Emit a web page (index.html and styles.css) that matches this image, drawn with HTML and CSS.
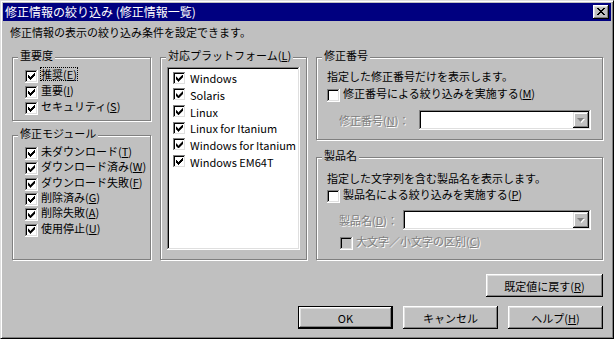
FILE: index.html
```html
<!DOCTYPE html>
<html lang="ja">
<head>
<meta charset="UTF-8" />
<title>修正情報の絞り込み</title>
<link rel="stylesheet" href="styles.css">
</head>
<body>

<div class="window">
  <div class="titlebar">
    <span class="title">修正情報の絞り込み (修正情報一覧)</span>
    <span class="close-btn">
      <svg width="8" height="7" viewBox="0 0 8 7"><path d="M0 0h2v1h-2zM6 0h2v1h-2zM1 1h2v1h-2zM5 1h2v1h-2zM2 2h4v1h-4zM3 3h2v1h-2zM2 4h4v1h-4zM1 5h2v1h-2zM5 5h2v1h-2zM0 6h2v1h-2zM6 6h2v1h-2z" fill="#000"/></svg>
    </span>
  </div>

  <div class="content">
    <p class="desc">修正情報の表示の絞り込み条件を設定できます。</p>

    <div class="columns">
      <div class="col-left">
        <div class="group g-level">
          <span class="group-title">重要度</span>
          <div class="cb-row"><span class="cb on"></span><span class="cb-label focus">推奨(<u>E</u>)</span></div>
          <div class="cb-row"><span class="cb on"></span><span class="cb-label">重要(<u>I</u>)</span></div>
          <div class="cb-row"><span class="cb on"></span><span class="cb-label">セキュリティ(<u>S</u>)</span></div>
        </div>
        <div class="group g-module">
          <span class="group-title">修正モジュール</span>
          <div class="cb-row"><span class="cb on"></span><span class="cb-label">未ダウンロード(<u>T</u>)</span></div>
          <div class="cb-row"><span class="cb on"></span><span class="cb-label">ダウンロード済み(<u>W</u>)</span></div>
          <div class="cb-row"><span class="cb on"></span><span class="cb-label">ダウンロード失敗(<u>F</u>)</span></div>
          <div class="cb-row"><span class="cb on"></span><span class="cb-label">削除済み(<u>G</u>)</span></div>
          <div class="cb-row"><span class="cb on"></span><span class="cb-label">削除失敗(<u>A</u>)</span></div>
          <div class="cb-row"><span class="cb on"></span><span class="cb-label">使用停止(<u>U</u>)</span></div>
        </div>
      </div>

      <div class="group g-platform">
        <span class="group-title">対応プラットフォーム(<u>L</u>)</span>
        <div class="listbox">
          <div class="list-row"><span class="cb on"></span>Windows</div>
          <div class="list-row"><span class="cb on"></span>Solaris</div>
          <div class="list-row"><span class="cb on"></span>Linux</div>
          <div class="list-row"><span class="cb on"></span>Linux for Itanium</div>
          <div class="list-row"><span class="cb on"></span>Windows for Itanium</div>
          <div class="list-row"><span class="cb on"></span>Windows EM64T</div>
        </div>
      </div>

      <div class="col-right">
        <div class="group g-fix">
          <span class="group-title">修正番号</span>
          <div class="line">指定した修正番号だけを表示します。</div>
          <div class="cb-row row-fix"><span class="cb"></span><span class="cb-label">修正番号による絞り込みを実施する(<u>M</u>)</span></div>
          <div class="combo-row row-fix-combo">
            <span class="combo-label disabled label-fix">修正番号(<u>N</u>)：</span>
            <span class="combo">
              <span class="combo-btn">
                <svg width="8" height="5" viewBox="0 0 8 5"><path d="M1 1h7l-3.5 4z" fill="#fff"/><path d="M0 0h7l-3.5 4z" fill="#808080"/></svg>
              </span>
            </span>
          </div>
        </div>

        <div class="group g-product">
          <span class="group-title">製品名</span>
          <div class="line">指定した文字列を含む製品名を表示します。</div>
          <div class="cb-row row-product"><span class="cb"></span><span class="cb-label">製品名による絞り込みを実施する(<u>P</u>)</span></div>
          <div class="combo-row row-product-combo">
            <span class="combo-label disabled label-product">製品名(<u>D</u>)：</span>
            <span class="combo">
              <span class="combo-btn">
                <svg width="8" height="5" viewBox="0 0 8 5"><path d="M1 1h7l-3.5 4z" fill="#fff"/><path d="M0 0h7l-3.5 4z" fill="#808080"/></svg>
              </span>
            </span>
          </div>
          <div class="cb-row row-case"><span class="cb off-disabled"></span><span class="cb-label disabled">大文字／小文字の区別(<u>C</u>)</span></div>
        </div>
      </div>
    </div>

    <div class="reset-row">
      <button class="btn btn-reset">既定値に戻す(<u>R</u>)</button>
    </div>

    <div class="button-row">
      <button class="btn btn-default">OK</button>
      <button class="btn">キャンセル</button>
      <button class="btn">ヘルプ(<u>H</u>)</button>
    </div>
  </div>
</div>

</body>
</html>
```

FILE: styles.css
```css
* { box-sizing: border-box; }

body {
  margin: 0;
  font-family: "Noto Sans CJK JP", sans-serif;
  font-size: 11px;
  color: #000;
  background: #c0c0c0;
}

/* Window frame */
.window {
  width: 614px;
  height: 339px;
  background: #c0c0c0;
  border: 1px solid;
  border-color: #dfdfdf #000 #000 #dfdfdf;
  box-shadow: inset 1px 1px #fff, inset -1px -1px #808080;
  padding: 2px;
  display: flex;
  flex-direction: column;
}

.titlebar {
  height: 18px;
  flex: none;
  background: #000080;
  color: #fff;
  display: flex;
  align-items: center;
  padding: 0 2px;
}
.title {
  flex: 1;
  font-size: 12px;
  line-height: 18px;
  white-space: nowrap;
}
.close-btn {
  width: 16px;
  height: 14px;
  background: #c0c0c0;
  box-shadow: inset -1px -1px #000, inset 1px 1px #fff, inset -2px -2px #808080, inset 2px 2px #dfdfdf;
  display: flex;
  align-items: center;
  justify-content: center;
  padding-bottom: 1px;
}
.close-btn svg { display: block; }

.content {
  flex: 1;
  display: flex;
  flex-direction: column;
  padding: 0 8px 0 4px;
}

.desc {
  margin: 4px 0 0 0;
  padding-left: 3px;
  line-height: 14px;
  white-space: nowrap;
}

.columns {
  display: flex;
  gap: 9px;
  height: 203px;
  margin: 18px 0 0 5px;
}

/* Etched group box */
.group {
  position: relative;
  border: 1px solid #808080;
  box-shadow: inset 1px 1px #fff, 1px 1px #fff;
}
.group-title {
  position: absolute;
  top: -10px;
  left: 5px;
  padding: 0 2px;
  line-height: 14px;
  background: #c0c0c0;
  white-space: nowrap;
}

.col-left {
  width: 139px;
  display: flex;
  flex-direction: column;
}
.g-level {
  height: 64px;
  padding: 9px 0 0 12px;
}
.g-module {
  flex: 1;
  margin-top: 14px;
  padding: 8px 0 0 12px;
}
.g-module .cb-row { height: 15.33px; }

.g-platform {
  width: 147px;
  padding: 9px 6px;
  display: flex;
  flex-direction: column;
}

.col-right {
  width: 287px;
  display: flex;
  flex-direction: column;
}
.g-fix {
  height: 83px;
  padding: 11px 11px 0 10px;
}
.g-product {
  flex: 1;
  margin-top: 17px;
  padding: 13px 11px 0 10px;
}

.line {
  line-height: 14px;
  white-space: nowrap;
}

/* Checkboxes */
.cb-row {
  display: flex;
  align-items: flex-start;
  gap: 2px;
  height: 16px;
  line-height: 14px;
  white-space: nowrap;
}
.cb-row .cb { margin-top: 3px; }
.cb-label { padding: 0 1px; }
.focus { outline: 1px dotted #000; outline-offset: -1px; }

.cb {
  flex: none;
  position: relative;
  width: 13px;
  height: 13px;
  background: #fff;
  box-shadow: inset -1px -1px #fff, inset 1px 1px #808080, inset -2px -2px #dfdfdf, inset 2px 2px #000;
}
.cb.on::after {
  content: '';
  position: absolute;
  left: 3px;
  top: 3px;
  width: 7px;
  height: 7px;
  background: #000;
  clip-path: polygon(6px 0, 7px 0, 7px 3px, 6px 3px, 6px 4px, 5px 4px, 5px 5px, 4px 5px, 4px 6px, 3px 6px, 3px 7px, 2px 7px, 2px 6px, 1px 6px, 1px 5px, 0 5px, 0 2px, 1px 2px, 1px 3px, 2px 3px, 2px 4px, 3px 4px, 3px 3px, 4px 3px, 4px 2px, 5px 2px, 5px 1px, 6px 1px);
}
.cb.off-disabled { background: #c0c0c0; }

.row-fix { margin-top: 3px; }
.row-product { margin-top: 2px; }
.row-case { margin-top: 4px; padding-left: 13px; }

.disabled {
  color: #808080;
  text-shadow: 1px 1px 0 #fff;
}

/* List box */
.listbox {
  flex: 1;
  background: #fff;
  box-shadow: inset -1px -1px #fff, inset 1px 1px #808080, inset -2px -2px #dfdfdf, inset 2px 2px #000;
  padding: 3px 0 0 6px;
}
.list-row {
  display: flex;
  align-items: center;
  gap: 4px;
  height: 16.67px;
  font-size: 11px;
  white-space: nowrap;
}

/* Combo boxes */
.combo-row {
  display: flex;
  align-items: center;
  padding-left: 12px;
}
.row-fix-combo { margin-top: 8px; }
.row-product-combo { margin-top: 7px; }
.label-fix { width: 80px; }
.label-product { width: 64px; }
.combo-label { white-space: nowrap; flex: none; }

.combo {
  flex: 1;
  height: 20px;
  background: #fff;
  box-shadow: inset -1px -1px #fff, inset 1px 1px #808080, inset -2px -2px #dfdfdf, inset 2px 2px #000;
  padding: 2px;
  display: flex;
  justify-content: flex-end;
}
.combo-btn {
  width: 16px;
  height: 16px;
  background: #c0c0c0;
  box-shadow: inset -1px -1px #000, inset 1px 1px #dfdfdf, inset -2px -2px #808080, inset 2px 2px #fff;
  display: flex;
  align-items: center;
  justify-content: center;
}
.combo-btn svg { display: block; }

/* Buttons */
.reset-row {
  display: flex;
  justify-content: flex-end;
  margin-top: 14px;
}
.button-row {
  display: flex;
  justify-content: flex-end;
  gap: 10px;
  margin-top: 9px;
}
.btn {
  font: inherit;
  color: #000;
  width: 95px;
  height: 23px;
  padding: 0;
  border: none;
  background: #c0c0c0;
  box-shadow: inset -1px -1px #000, inset 1px 1px #fff, inset -2px -2px #808080, inset 2px 2px #dfdfdf;
  white-space: nowrap;
}
.btn-reset { width: 117px; }
.btn-default {
  box-shadow: inset 0 0 0 1px #000, inset -2px -2px #000, inset 2px 2px #fff, inset -3px -3px #808080, inset 3px 3px #dfdfdf;
}
```
